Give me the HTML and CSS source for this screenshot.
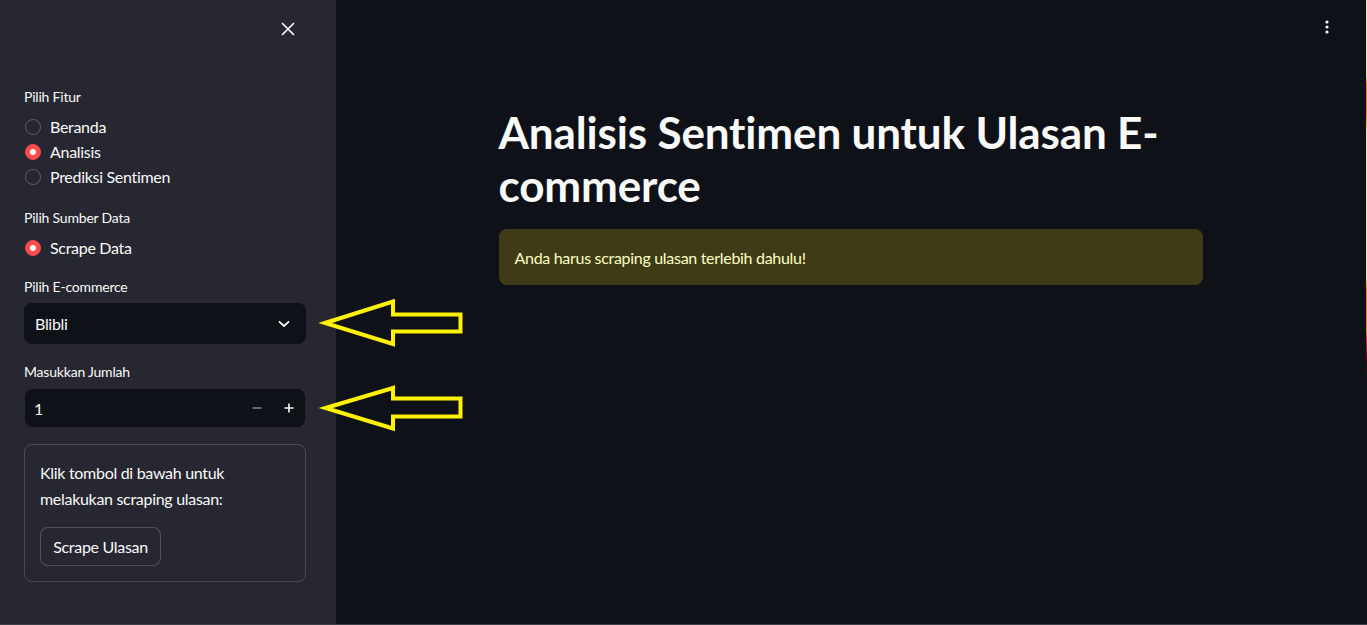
FILE: index.html
```html
<!DOCTYPE html>
<html lang="id">
<head>
<meta charset="utf-8">
<title>Analisis Sentimen</title>
<link rel="stylesheet" href="styles.css">
</head>
<body>
<div class="app">
  <aside class="sidebar">
    <div class="sb-header">
      <button class="icon-btn close" aria-label="Close">
        <svg width="14" height="14" viewBox="0 0 14 14"><path d="M1.5 1.5 L12.5 12.5 M12.5 1.5 L1.5 12.5" stroke="#fafafa" stroke-width="1.7" stroke-linecap="round"/></svg>
      </button>
    </div>
    <div class="sb-content">
      <div class="widget w-radio-1">
        <div class="label">Pilih Fitur</div>
        <div class="radio-group">
          <div class="radio"><span class="dot"></span><span>Beranda</span></div>
          <div class="radio checked"><span class="dot"></span><span>Analisis</span></div>
          <div class="radio"><span class="dot"></span><span>Prediksi Sentimen</span></div>
        </div>
      </div>
      <div class="widget">
        <div class="label">Pilih Sumber Data</div>
        <div class="radio-group">
          <div class="radio checked"><span class="dot"></span><span>Scrape Data</span></div>
        </div>
      </div>
      <div class="widget w-select">
        <div class="label">Pilih E-commerce</div>
        <div class="select">
          <span>Blibli</span>
          <svg width="12" height="8" viewBox="0 0 12 8"><path d="M1.5 1.8 L6 6 L10.5 1.8" fill="none" stroke="#fafafa" stroke-width="1.8" stroke-linecap="round" stroke-linejoin="round"/></svg>
        </div>
      </div>
      <div class="widget">
        <div class="label">Masukkan Jumlah</div>
        <div class="number">
          <span class="num-val">1</span>
          <span class="step minus">
            <svg width="10" height="10" viewBox="0 0 10 10"><path d="M0.5 5 H9.5" stroke="#8b8d94" stroke-width="1.4"/></svg>
          </span>
          <span class="step plus">
            <svg width="10" height="10" viewBox="0 0 10 10"><path d="M0.5 5 H9.5 M5 0.5 V9.5" stroke="#fafafa" stroke-width="1.6"/></svg>
          </span>
        </div>
      </div>
      <div class="card">
        <p class="card-text">Klik tombol di bawah untuk melakukan scraping ulasan:</p>
        <button class="btn">Scrape Ulasan</button>
      </div>
    </div>
  </aside>
  <main class="main">
    <div class="main-header">
      <button class="icon-btn menu" aria-label="Menu">
        <svg width="4" height="14" viewBox="0 0 4 14"><circle cx="2" cy="2" r="1.6" fill="#fafafa"/><circle cx="2" cy="7" r="1.6" fill="#fafafa"/><circle cx="2" cy="12" r="1.6" fill="#fafafa"/></svg>
      </button>
    </div>
    <div class="block">
      <h1 class="title">Analisis Sentimen untuk Ulasan E-commerce</h1>
      <div class="alert">Anda harus scraping ulasan terlebih dahulu!</div>
    </div>
  </main>
  <div class="edge"></div>
</div>
<div class="bottom-line"></div>
<svg class="annot" width="1367" height="625" viewBox="0 0 1367 625">
  <path d="M325 323 L393 301.5 L393 314.5 L460.5 314.5 L460.5 331.5 L393 331.5 L393 344 Z" fill="none" stroke="#fff200" stroke-width="4" stroke-linejoin="miter"/>
  <path d="M325.5 408 L393 388 L393 398.5 L460.5 398.5 L460.5 416.5 L393 416.5 L393 428.5 Z" fill="none" stroke="#fff200" stroke-width="4" stroke-linejoin="miter"/>
</svg>
</body>
</html>
```
FILE: styles.css
```css
* { box-sizing: border-box; }
html, body { margin: 0; padding: 0; }
body {
  width: 1367px;
  height: 625px;
  overflow: hidden;
  background: #0e1117;
  color: #fafafa;
  font-family: "Lato", "Noto Sans", sans-serif;
  position: relative;
}
.app {
  display: flex;
  height: 624px;
}
.sidebar {
  width: 336px;
  flex: none;
  background: #262730;
  display: flex;
  flex-direction: column;
}
.sb-header {
  height: 60px;
  display: flex;
  justify-content: flex-end;
  align-items: flex-start;
  padding: 17px 36px 0 0;
}
.icon-btn {
  background: none;
  border: none;
  padding: 0;
  width: 24px;
  height: 24px;
  display: flex;
  align-items: center;
  justify-content: center;
  cursor: pointer;
}
.sb-content {
  padding: 27px 30px 0 24px;
  display: flex;
  flex-direction: column;
}
.widget { margin-bottom: 17px; }
.w-radio-1 { margin-bottom: 19px; }
.w-select { margin-bottom: 18px; }
.label {
  font-size: 14px;
  line-height: 20px;
  height: 20px;
  margin-bottom: 7px;
  letter-spacing: -0.2px;
}
.radio-group { display: flex; flex-direction: column; }
.radio {
  height: 25px;
  display: flex;
  align-items: center;
  font-size: 16px;
  letter-spacing: -0.3px;
}
.radio .dot {
  width: 16px;
  height: 16px;
  border-radius: 50%;
  border: 1px solid #5f616a;
  margin: 0 9px 0 1px;
  flex: none;
  display: flex;
  align-items: center;
  justify-content: center;
}
.radio.checked .dot {
  background: #ff4b4b;
  border-color: #ff4b4b;
}
.radio.checked .dot::after {
  content: "";
  width: 6px;
  height: 6px;
  border-radius: 50%;
  background: #fafafa;
}
.select {
  height: 41px;
  margin-top: -1px;
  background: #0e1117;
  border-radius: 8px;
  display: flex;
  align-items: center;
  justify-content: space-between;
  padding: 0 16px 0 11px;
  font-size: 16px;
  letter-spacing: -0.3px;
}
.number {
  height: 38px;
  margin: 0 1px;
  background: #0e1117;
  border-radius: 8px;
  display: flex;
  align-items: center;
  padding: 0 0 0 9px;
  font-size: 16px;
}
.num-val { flex: 1; }
.step {
  width: 32px;
  height: 38px;
  display: flex;
  align-items: center;
  justify-content: center;
}
.card {
  border: 1px solid rgba(250, 250, 250, 0.17);
  border-radius: 8px;
  padding: 15px 15px 14px 15px;
  height: 138px;
}
.card-text {
  margin: 0 0 15px 0;
  font-size: 16px;
  line-height: 26px;
  letter-spacing: -0.3px;
  width: 200px;
}
.btn {
  height: 39px;
  padding: 0 12px;
  background: #262730;
  color: #fafafa;
  border: 1px solid rgba(250, 250, 250, 0.2);
  border-radius: 8px;
  font-family: inherit;
  font-size: 16px;
  letter-spacing: -0.3px;
  width: 121px;
}
.main {
  flex: 1;
  display: flex;
  flex-direction: column;
  align-items: center;
}
.main-header {
  align-self: stretch;
  height: 60px;
  display: flex;
  justify-content: flex-end;
  padding: 15px 27px 0 0;
}
.block {
  width: 704px;
  margin-left: -1px;
  padding-top: 46px;
}
.title {
  margin: 0 0 17px 0;
  font-size: 44px;
  line-height: 53px;
  font-weight: 700;
  letter-spacing: -0.15px;
}
.alert {
  background: #3e3b16;
  color: #ffffc2;
  border-radius: 8px;
  height: 56px;
  padding: 0 16px;
  display: flex;
  align-items: center;
  font-size: 16px;
  letter-spacing: -0.3px;
}
.edge {
  width: 1px;
  flex: none;
  background: linear-gradient(to bottom, #0e1117 0, #e9dcc0 0, #e9dcc0 75px, #d98b2b 85px, #d98b2b 115px, #e9dcc0 130px, #e9dcc0 280px, #d98b2b 290px, #d98b2b 330px, #e01d4a 340px, #3a0a10 360px, #0e1117 380px);
}
.bottom-line {
  height: 1px;
  background: #3d3f47;
}
.annot {
  position: absolute;
  left: 0;
  top: 0;
  pointer-events: none;
}
```
